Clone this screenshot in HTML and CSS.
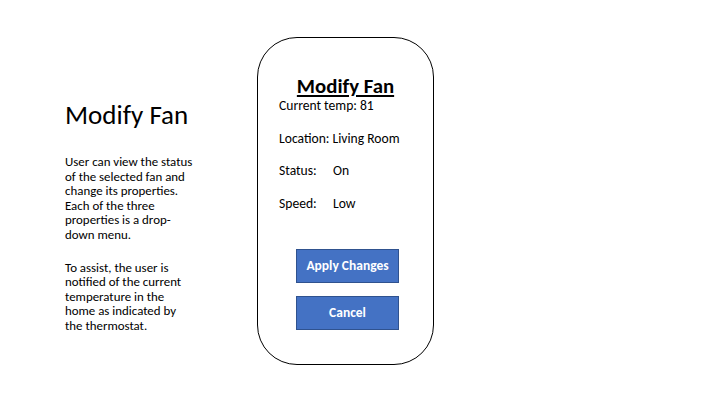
FILE: index.html
```html
<!DOCTYPE html>
<html>
<head>
<meta charset="utf-8">
<link rel="stylesheet" href="styles.css">
</head>
<body>
<div class="slide">
  <div class="intro">
    <h1 class="intro-title">Modify Fan</h1>
    <p class="intro-text">User can view the status of the selected fan and change its properties. Each of the three properties is a drop-down menu.</p>
    <p class="intro-text">To assist, the user is notified of the current temperature in the home as indicated by the thermostat.</p>
  </div>
  <div class="phone">
    <h2 class="phone-title">Modify Fan</h2>
    <div class="field">Current temp: 81</div>
    <div class="field">Location: Living Room</div>
    <div class="field"><span class="label">Status:</span><span>On</span></div>
    <div class="field"><span class="label">Speed:</span><span>Low</span></div>
    <div class="actions">
      <button class="btn">Apply Changes</button>
      <button class="btn">Cancel</button>
    </div>
  </div>
</div>
</body>
</html>
```
FILE: styles.css
```css
html, body {
  margin: 0;
  padding: 0;
  background: #ffffff;
}
.slide {
  width: 720px;
  height: 405px;
  display: flex;
  align-items: flex-start;
  font-family: Carlito, Lato, "Open Sans", sans-serif;
  color: #000;
}
.intro {
  width: 150px;
  margin-left: 65px;
  padding-top: 99px;
}
.intro-title {
  margin: 0 0 24px 0;
  font-weight: 400;
  font-size: 27px;
  line-height: 32px;
}
.intro-text {
  width: 130px;
  margin: 0 0 18px 0;
  font-size: 12.9px;
  line-height: 14.6px;
}
.phone {
  margin-left: 42px;
  margin-top: 37px;
  width: 175px;
  height: 326px;
  border: 1px solid #000;
  border-radius: 40px;
  box-sizing: content-box;
  display: flex;
  flex-direction: column;
}
.phone-title {
  margin: 36px 0 0 0;
  text-align: center;
  font-size: 20.8px;
  font-weight: 700;
  text-decoration: underline;
  text-decoration-thickness: 2px;
  text-underline-offset: 2px;
  line-height: 24px;
}
.field {
  margin-left: 21px;
  font-size: 13.6px;
  line-height: 16px;
  height: 16px;
  margin-bottom: 16.7px;
  display: flex;
}
.label {
  width: 54px;
}
.actions {
  margin-top: 20px;
  padding-left: 4px;
  display: flex;
  flex-direction: column;
  align-items: center;
  gap: 13px;
}
.btn {
  width: 103px;
  height: 34px;
  background: #4472c4;
  border: 1px solid #2f528f;
  color: #fff;
  font-family: Carlito, Lato, "Open Sans", sans-serif;
  font-weight: 700;
  font-size: 13.5px;
  padding: 0;
}
```
